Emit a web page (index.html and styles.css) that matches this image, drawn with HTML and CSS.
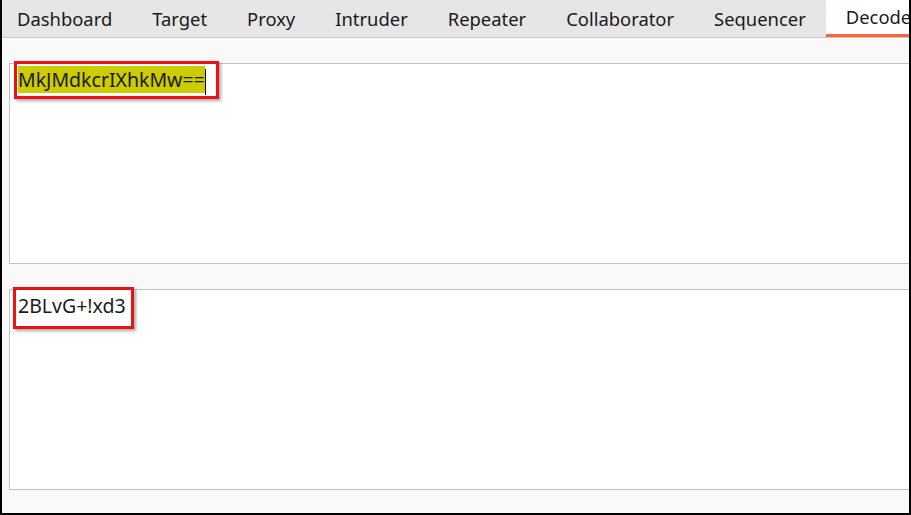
FILE: index.html
```
<!DOCTYPE html>
<html>
<head>
<meta charset="utf-8">
<link rel="stylesheet" href="styles.css">
</head>
<body>
<div class="window">
  <nav class="tabs">
    <div class="tab first">Dashboard</div>
    <div class="tab">Target</div>
    <div class="tab">Proxy</div>
    <div class="tab">Intruder</div>
    <div class="tab">Repeater</div>
    <div class="tab">Collaborator</div>
    <div class="tab">Sequencer</div>
    <div class="tab active">Decoder</div>
  </nav>
  <main class="content">
    <section class="editor">
      <span class="mark mark-top"><span class="sel">MkJMdkcrIXhkMw==</span><span class="caret"></span></span>
    </section>
    <section class="editor">
      <span class="mark mark-bottom">2BLvG+!xd3</span>
    </section>
  </main>
</div>
</body>
</html>
```
FILE: styles.css
```
html, body {
  margin: 0;
  padding: 0;
  background: #000;
  width: 911px;
  height: 515px;
  overflow: hidden;
}
.window {
  margin: 0 2px 0 2px;
  width: 907px;
  height: 513px;
  background: #f9f9f9;
  overflow: hidden;
  font-family: "Noto Sans", "Open Sans", sans-serif;
  color: #1a1a1a;
}
.tabs {
  display: flex;
  height: 37px;
  background: #e6e6e6;
  border-bottom: 1px solid #c8c8c8;
  white-space: nowrap;
}
.tab {
  box-sizing: border-box;
  height: 37px;
  padding: 0 20px;
  font-size: 18.4px;
  line-height: 37px;
  flex: none;
}
.tab.first { padding-left: 15px; }
.tab.active {
  background: #ffffff;
  border-bottom: 3px solid #ff6633;
  line-height: 34px;
}
.content {
  display: flex;
  flex-direction: column;
  gap: 25px;
  padding: 25px 0 0 7px;
}
.editor {
  box-sizing: border-box;
  width: 1000px;
  height: 201px;
  background: #fff;
  border: 1px solid #c2c2c2;
  padding: 1px 0 0 8px;
  font-size: 19.5px;
  line-height: 30px;
}
.mark {
  position: relative;
  display: inline-block;
}
.mark::after {
  content: "";
  position: absolute;
  border: 3px solid #ee1111;
  box-shadow: 2px 2px 3px rgba(0,0,0,0.35);
}
.mark-top::after { left: -4px; top: -4px; right: -13px; bottom: -4px; }
.mark-bottom::after { left: -5px; top: -4px; right: -8px; bottom: -8px; }
.sel {
  background: #cccc00;
  color: #1a1a1a;
}
.caret {
  display: inline-block;
  width: 1px;
  height: 26px;
  background: #000;
  vertical-align: middle;
}
```
